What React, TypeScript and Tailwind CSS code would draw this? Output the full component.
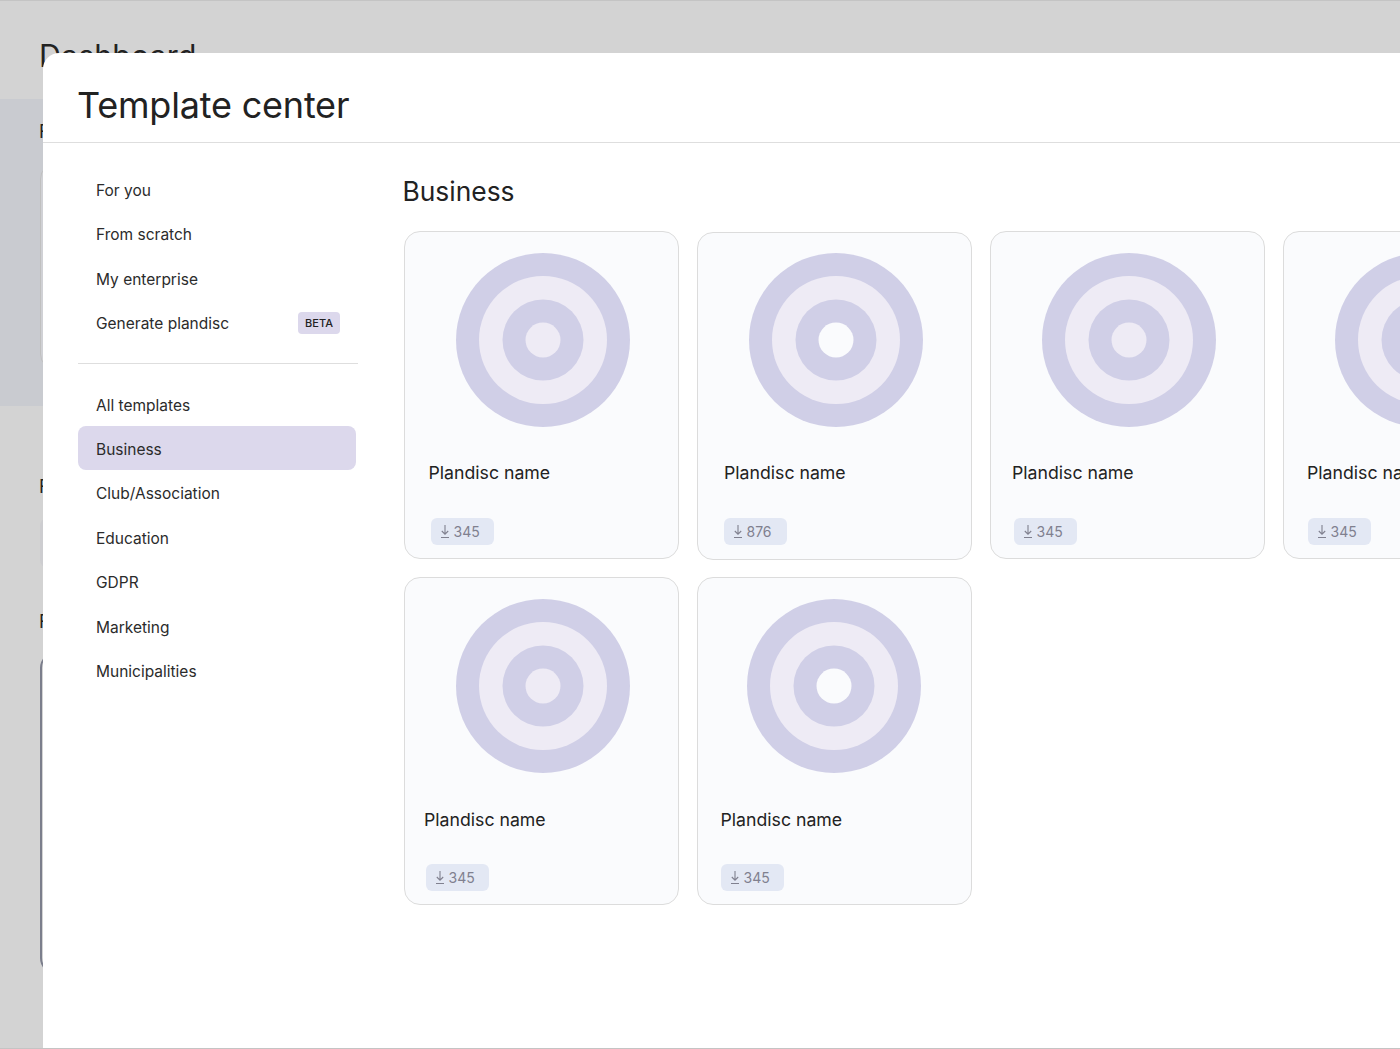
const navTop = ["For you", "From scratch", "My enterprise"]
const navBottom = ["Club/Association", "Education", "GDPR", "Marketing", "Municipalities"]

type Plan = {
  count: string
  discClass: string
  holeFill: string
  nameClass: string
  badgeClass: string
  cardClass?: string
}

const row1: Plan[] = [
  { count: "345", discClass: "ml-[51px]", holeFill: "#eeebf5", nameClass: "ml-[24px]", badgeClass: "ml-[26px]", cardClass: "pt-[21px]" },
  { count: "876", discClass: "ml-[51px]", holeFill: "#fafbfd", nameClass: "ml-[26.5px]", badgeClass: "ml-[26px]", cardClass: "mt-px pt-[20px]" },
  { count: "345", discClass: "ml-[51px]", holeFill: "#eeebf5", nameClass: "ml-[21.5px]", badgeClass: "ml-[23px]", cardClass: "pt-[21px]" },
  { count: "345", discClass: "ml-[51px]", holeFill: "#eeebf5", nameClass: "ml-[23.5px]", badgeClass: "ml-[24px]", cardClass: "pt-[21px]" },
]

const row2: Plan[] = [
  { count: "345", discClass: "ml-[51px]", holeFill: "#eeebf5", nameClass: "ml-[19.5px] translate-y-px", badgeClass: "ml-[21px]", cardClass: "pt-[21px]" },
  { count: "345", discClass: "ml-[49.5px]", holeFill: "#fafbfd", nameClass: "ml-[23px] translate-y-px", badgeClass: "ml-[23px]", cardClass: "pt-[21px]" },
]

const Disc = ({ holeFill, className }: { holeFill: string; className: string }) => (
  <svg width="174" height="174" viewBox="0 0 174 174" className={className}>
    <circle cx="87" cy="87" r="87" fill="#d0cfe7" />
    <circle cx="87" cy="87" r="64" fill="#eeebf5" />
    <circle cx="87" cy="87" r="40.5" fill="#d0cfe7" />
    <circle cx="87" cy="87" r="17.5" fill={holeFill} />
  </svg>
)

const DownloadIcon = () => (
  <svg width="10" height="15" viewBox="0 0 10 15" fill="none" stroke="#80808f" strokeWidth="1.1">
    <path d="M5 1v9M1.8 7 5 10.2 8.2 7M1 13.5h8" />
  </svg>
)

const PlanCard = ({ plan }: { plan: Plan }) => (
  <div
    className={`h-[328px] w-[275px] shrink-0 rounded-2xl border border-[#dcdcdc] bg-[#fafbfd] ${plan.cardClass ?? ""}`}
  >
    <Disc holeFill={plan.holeFill} className={`block ${plan.discClass}`} />
    <p className={`mt-[34px] text-[17.7px] leading-6 whitespace-nowrap text-[#222222] ${plan.nameClass}`}>
      Plandisc name
    </p>
    <div
      className={`mt-[33px] flex h-[27px] w-[63px] items-center gap-[4px] rounded-md bg-[#e3e8f4] pl-[9px] text-sm text-[#80808f] ${plan.badgeClass}`}
    >
      <DownloadIcon />
      {plan.count}
    </div>
  </div>
)

const NavItem = ({ label }: { label: string }) => (
  <div className="flex h-[44.6px] items-center pl-[18px] text-[#2b2b2b]">{label}</div>
)

export default function App() {
  return (
    <div className="relative h-[1049px] w-[1400px] overflow-hidden border-y border-[#c4c4c4] bg-[#d3d3d3] font-['Inter',sans-serif] text-[15.5px]">
      {/* page behind the modal, only the left edge shows */}
      <p className="pt-[35px] pl-[39px] text-[30.5px] leading-10 text-[#222222]">Dashboard</p>
      <div className="mt-[23px] h-[307px] bg-[#c9cbd0] pt-[19px] pl-[39px]">
        <p className="text-[18px] text-[#222222]">F</p>
        <div className="mt-[18px] ml-px h-[207px] w-[300px] rounded-2xl border border-[#c0c0c0] bg-[#d0d1d5]" />
      </div>
      <p className="mt-[67px] pl-[39px] text-[18px] text-[#222222]">F</p>
      <div className="mt-[18px] ml-[40px] h-[50px] w-[300px] rounded-lg bg-[#cdcdd0]" />
      <p className="mt-[40px] pl-[39px] text-[18px] text-[#222222]">F</p>
      <div className="mt-[17px] ml-[40px] h-[322px] w-[300px] rounded-2xl border-2 border-[#7b7e8c]" />

      <div className="absolute top-[52px] left-[43px] h-[995px] w-[1400px] rounded-tl-2xl bg-white">
        <div className="h-[90px] border-b border-[#dedede] pt-[29px] pl-[34px]">
          <h1 className="text-[36px] leading-[46px] font-normal tracking-[-0.2px] text-[#222222]">Template center</h1>
        </div>
        <div className="flex">
          <aside className="w-[325px] shrink-0 pt-[25px] pl-[35px]">
            <div className="w-[278px]">
              {navTop.map((label) => (
                <NavItem key={label} label={label} />
              ))}
              <div className="flex h-[44.6px] items-center justify-between pr-[16px] pl-[18px] text-[#2b2b2b]">
                Generate plandisc
                <span className="mb-[2px] rounded bg-[#dcd8ec] px-[7px] py-[3px] text-[11px] font-medium text-[#222222]">
                  BETA
                </span>
              </div>
            </div>
            <div className="mt-[17px] mb-[19px] h-px w-[280px] bg-[#dedede]" />
            <div className="w-[278px]">
              <div className="flex h-[43px] items-center pt-[2px] pl-[18px] text-[#2b2b2b]">All templates</div>
              <div className="flex h-[44px] items-center rounded-lg bg-[#dcd8ec] pt-[2px] pl-[18px] text-[#2b2b2b]">
                Business
              </div>
              <div className="pt-px">
                {navBottom.map((label) => (
                  <NavItem key={label} label={label} />
                ))}
              </div>
            </div>
          </aside>
          <main className="min-w-0 flex-1 pt-[30px] pl-[35.5px]">
            <h2 className="-ml-px text-[26.4px] leading-9 font-normal text-[#222222]">Business</h2>
            <div className="mt-[22px] flex gap-[18px]">
              {row1.map((plan, i) => (
                <PlanCard key={i} plan={plan} />
              ))}
            </div>
            <div className="mt-[17px] flex gap-[18px]">
              {row2.map((plan, i) => (
                <PlanCard key={i} plan={plan} />
              ))}
            </div>
          </main>
        </div>
      </div>
    </div>
  )
}
